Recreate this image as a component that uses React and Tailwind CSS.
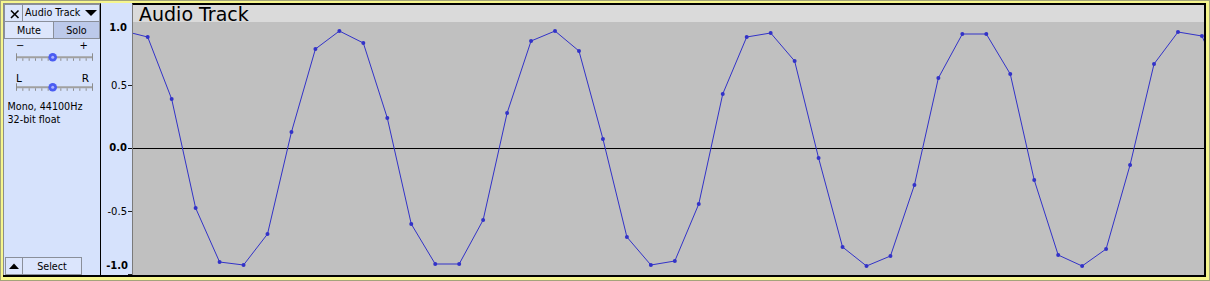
import React from "react";

const YS = [37,99,208,262,265,234,132,49,31,43,118,224,264,264,220,113,41,31,51,139,237,265,261,204,94,37,33,61,158,247,266,256,185,78,34,34,74,180,255,266,249,165,64,32,36];
const STEP = 23.96;
const X0 = 147.7;

function Slider({ h, y }) {
  const ticks = [];
  for (let i = 0; i <= 12; i++) {
    const x = 12.5 + i * (76 / 12);
    const end = i === 0 || i === 12;
    ticks.push(
      <line key={i} x1={x} x2={x} y1={end ? y - 4 : y + 1} y2={y + 3.5} stroke="#8c8c8c" strokeWidth="1" />
    );
  }
  return (
    <svg width="96" height={h} className="block">
      <line x1="12" x2="89" y1={y} y2={y} stroke="#a0a0a0" strokeWidth="2" />
      {ticks}
      <circle cx="48.7" cy={y} r="4.3" fill="#4a5cf2" />
      <circle cx="48.7" cy={y} r="1.5" fill="#aab3ff" />
    </svg>
  );
}

function Wave() {
  const pts = [[X0 - STEP, 31]];
  YS.forEach((y, k) => pts.push([X0 + STEP * k, y]));
  pts.push([X0 + STEP * 45, 90]);
  const poly = pts.map((p) => p[0].toFixed(2) + "," + p[1]).join(" ");
  return (
    <svg width="1071" height="253" viewBox="133 22 1071 253" className="block">
      <rect x="133" y="22" width="1071" height="253" fill="#c0c0c0" />
      <line x1="133" x2="1204" y1="148.5" y2="148.5" stroke="#000" strokeWidth="1" />
      <polyline points={poly} fill="none" stroke="#3232c8" strokeWidth="1" />
      {YS.map((y, k) => (
        <circle key={k} cx={X0 + STEP * k} cy={y} r="2" fill="#3232c8" />
      ))}
    </svg>
  );
}

export default function App() {
  return (
    <div className="w-[1210px] h-[281px] border border-[#a4a47a] font-['DejaVu_Sans',sans-serif] text-black">
      <div className="w-full h-full border-t-2 border-l-2 border-r-[3px] border-b-[3px] border-[#f6f68e]">
        <div className="w-full h-full flex border-b-2 border-black">
          {/* control panel */}
          <div className="w-[98px] h-full flex flex-col bg-[#d6e2fc] border-t border-l border-r border-t-[#8c8c8c] border-l-[#8c8c8c] border-r-black">
            <div className="flex h-[18px]">
              <div className="w-[19px] h-full border border-[#8a8f9a] bg-[#dbe5fc] flex items-center justify-center">
                <svg width="17" height="16" className="block">
                  <line x1="6" y1="5.5" x2="13.5" y2="13" stroke="#000" strokeWidth="1.6" />
                  <line x1="13.5" y1="5.5" x2="6" y2="13" stroke="#000" strokeWidth="1.6" />
                </svg>
              </div>
              <div className="flex-1 h-full border border-l-0 border-[#8a8f9a] bg-[#dbe5fc] flex items-center pl-[2px] text-[9.6px] leading-none">
                <span>Audio Track</span>
                <svg width="14" height="8" className="block ml-auto mr-[1px]">
                  <polygon points="1,1 13,1 7,7" fill="#000" />
                </svg>
              </div>
            </div>
            <div className="flex h-[17px] text-[9.6px] leading-none">
              <div className="w-[50px] h-full border border-t-0 border-[#8a8f9a] bg-[#dde6fc] flex items-center justify-center pt-[1px]">Mute</div>
              <div className="flex-1 h-full border border-t-0 border-l-0 border-[#8a8f9a] bg-[#bcc9ea] flex items-center justify-center pt-[1px]">Solo</div>
            </div>
            <div className="mt-[2px] h-[10px] flex justify-between px-[12px] text-[10px] leading-[10px]">
              <span>−</span>
              <span>+</span>
            </div>
            <Slider h={12} y={6.3} />
            <div className="mt-[10px] h-[10px] flex justify-between pl-[12px] pr-[11px] text-[10.5px] leading-[10px]">
              <span>L</span>
              <span>R</span>
            </div>
            <Slider h={10} y={4.3} />
            <div className="mt-[8px] pl-[3.5px] text-[9.6px] leading-[12.6px]">
              <div>Mono, 44100Hz</div>
              <div>32-bit float</div>
            </div>
            <div className="mt-auto flex h-[18px] pl-[1px]">
              <div className="w-[18px] h-full border border-[#8a8f9a] bg-[#dbe5fc] flex items-center justify-center">
                <svg width="12" height="8" className="block">
                  <polygon points="1,7 11,7 6,1.5" fill="#000" />
                </svg>
              </div>
              <div className="w-[59px] h-full border border-l-0 border-[#8a8f9a] bg-[#dbe5fc] flex items-center justify-center text-[9.6px] leading-none pt-[1px]">
                Select
              </div>
            </div>
          </div>
          {/* ruler */}
          <div className="relative w-[31px] h-full bg-[#d6e2fc] text-[10px] leading-[10px]">
            <div className="absolute right-[5px] top-[20.2px] font-bold">1.0</div>
            <div className="absolute right-[5px] top-[77.8px]">0.5</div>
            <div className="absolute right-[0px] top-[82px] w-[4px] h-px bg-[#202020]" />
            <div className="absolute right-[5px] top-[140.2px] font-bold">0.0</div>
            <div className="absolute right-[0px] top-[145px] w-[4px] h-px bg-black" />
            <div className="absolute right-[5px] top-[203.5px]">-0.5</div>
            <div className="absolute right-[0px] top-[208px] w-[4px] h-px bg-[#202020]" />
            <div className="absolute right-[4px] top-[257.5px] font-bold">-1.0</div>
            <div className="absolute right-[0px] top-[271px] w-[4px] h-px bg-[#202020]" />
          </div>
          {/* wave column */}
          <div className="flex-1 h-full flex flex-col border-l border-l-[#7a7a7a] border-t-2 border-t-black border-r-2 border-r-black">
            <div className="h-[17px] bg-[#dadada] pl-[6px] pt-[1px] text-[19px] leading-[16px] whitespace-nowrap">
              Audio Track
            </div>
            <Wave />
          </div>
        </div>
      </div>
    </div>
  );
}
